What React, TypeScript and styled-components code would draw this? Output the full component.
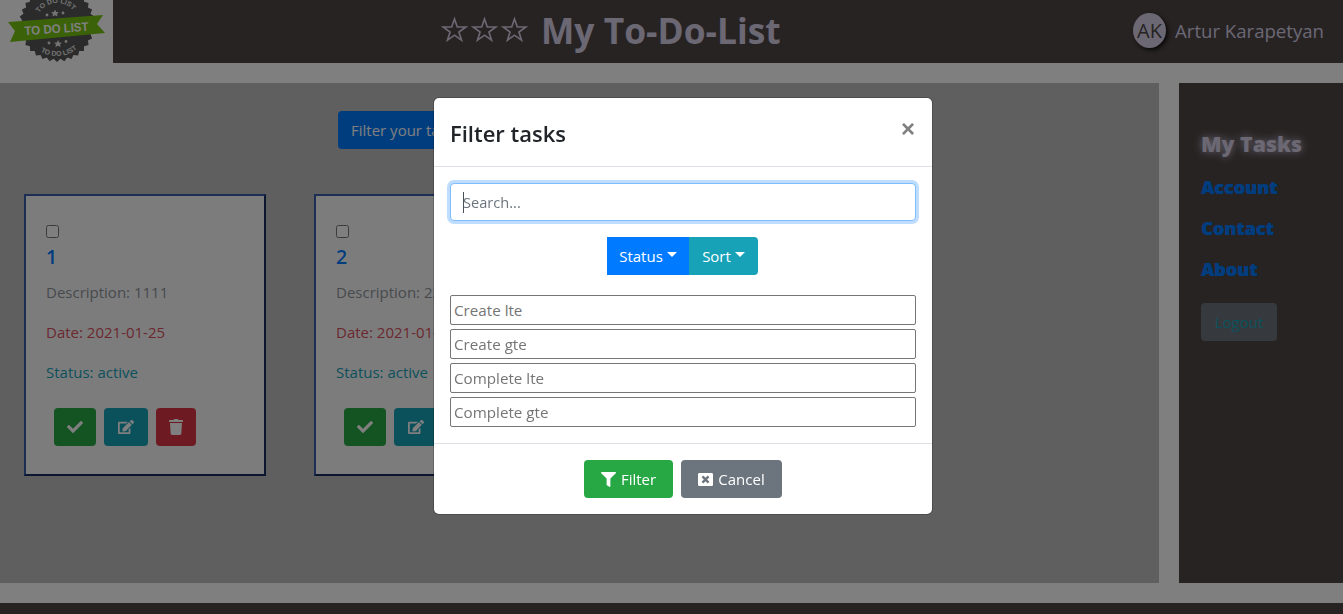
import React from 'react';
import styled, { createGlobalStyle } from 'styled-components';
import { FaCheck, FaEdit, FaTrash, FaFilter, FaWindowClose } from 'react-icons/fa';

const FONT = `"Open Sans", "Noto Sans", "Liberation Sans", sans-serif`;

const GlobalStyle = createGlobalStyle`
  html, body {
    margin: 0;
    height: 100%;
    overflow: hidden;
    background: #fff;
    font-family: ${FONT};
  }
  * { box-sizing: border-box; }
`;

const Page = styled.div`
  height: 614px;
  overflow: hidden;
`;

const Header = styled.header`
  display: flex;
  height: 63px;
`;

const LogoBox = styled.div`
  flex: 0 0 113px;
  overflow: hidden;
`;

const HeaderBar = styled.div`
  flex: 1;
  display: flex;
  align-items: center;
  justify-content: space-between;
  padding: 0 19px 0 328px;
  background: #4e4646;
  color: #d6d0e6;
`;

const Title = styled.h1`
  display: flex;
  align-items: center;
  gap: 13px;
  margin: -4px 0 0;
  font-size: 35.4px;
  font-weight: 700;
  white-space: nowrap;
`;

const Stars = styled.span`
  display: flex;
  gap: 3px;
`;

const User = styled.div`
  display: flex;
  align-items: center;
  gap: 9px;
  margin-top: -2px;
  font-size: 18.6px;
  white-space: nowrap;
`;

const Avatar = styled.div`
  width: 33px;
  height: 35px;
  border-radius: 50%;
  display: flex;
  align-items: center;
  justify-content: center;
  background: #d6d0e6;
  color: #4e4646;
  font-size: 20px;
  box-shadow: 2px 2px 4px rgba(0, 0, 0, 0.8);
`;

const Content = styled.div`
  display: flex;
  gap: 20px;
  height: 500px;
  margin-top: 20px;
`;

const Main = styled.main`
  flex: 1;
  padding-top: 28px;
  background: #bebebe;
`;

const FilterOpen = styled.button`
  display: block;
  height: 38px;
  margin-left: 338px;
  padding: 0 13px;
  border: 0;
  border-radius: 4px;
  background: #007bff;
  color: #fff;
  font-family: ${FONT};
  font-size: 15px;
`;

const CardRow = styled.div`
  display: flex;
  gap: 48px;
  margin-top: 45px;
  padding-left: 24px;
`;

const Card = styled.article`
  width: 242px;
  height: 282px;
  padding: 29px 20px 0;
  background: #f8f9fa;
  border: 2px solid;
  border-color: #3a5ca8 #182c60 #182c60 #3a5ca8;
`;

const Check = styled.input`
  display: block;
  width: 13px;
  height: 13px;
  margin: 0;
`;

const CardNumber = styled.h5`
  margin: 4px 0 8px;
  color: #007bff;
  font-size: 19.5px;
  font-weight: 600;
  line-height: 30px;
`;

const toneColors = {
  muted: '#8f959a',
  danger: '#d9515e',
  info: '#17a2b8',
};

const CardText = styled.p<{ $tone: keyof typeof toneColors }>`
  margin: 0 0 16px;
  color: ${({ $tone }) => toneColors[$tone]};
  font-size: 15px;
  line-height: 24px;
  white-space: nowrap;
`;

const CardActions = styled.div`
  display: flex;
  gap: 8px;
  margin: 0 0 0 8px;
  padding-top: 8px;
`;

const buttonColors = {
  success: '#28a745',
  info: '#17a2b8',
  danger: '#dc3545',
  primary: '#007bff',
  secondary: '#6c757d',
};

const IconButton = styled.button<{ $color: keyof typeof buttonColors; $width: number }>`
  display: flex;
  align-items: center;
  justify-content: center;
  flex: 0 0 ${({ $width }) => $width}px;
  height: 38px;
  padding: 0;
  border: 0;
  border-radius: 4px;
  background: ${({ $color }) => buttonColors[$color]};
  color: #fff;
  font-size: 16px;

  svg {
    width: auto;
    height: 1em;
  }
`;

const Sidebar = styled.aside`
  flex: 0 0 164px;
  padding: 44px 22px 0;
  background: #4e4646;
`;

const NavLink = styled.a<{ $active?: boolean }>`
  display: block;
  height: ${({ $active }) => ($active ? '44px' : '41px')};
  color: ${({ $active }) => ($active ? '#d6d0e6' : '#007bff')};
  font-size: ${({ $active }) => ($active ? '21.3px' : '18px')};
  font-weight: 800;
  line-height: 33px;
  white-space: nowrap;
  text-shadow: ${({ $active }) => ($active ? '0 0 8px #d6d0e6' : '0.4px 0 0 #007bff')};
`;

const Logout = styled.button`
  display: block;
  width: 76px;
  height: 38px;
  margin-top: 9px;
  padding: 0;
  border: 0;
  border-radius: 4px;
  background: #6c757d;
  color: #17a2b8;
  font-family: ${FONT};
  font-size: 15px;
`;

const Footer = styled.footer`
  height: 11px;
  margin-top: 20px;
  background: #4e4646;
`;

const Backdrop = styled.div`
  position: fixed;
  inset: 0;
  display: flex;
  justify-content: center;
  align-items: flex-start;
  padding: 98px 0 0 23px;
  background: rgba(0, 0, 0, 0.5);
`;

const Modal = styled.div`
  width: 498px;
  height: 416px;
  display: flex;
  flex-direction: column;
  border-radius: 5px;
  background: #fff;
  box-shadow: 0 0 0 1px rgba(0, 0, 0, 0.2);
`;

const ModalHeader = styled.div`
  display: flex;
  align-items: flex-start;
  justify-content: space-between;
  height: 69px;
  padding: 19px 17px 0 16px;
  border-bottom: 1px solid #dee2e6;
`;

const ModalTitle = styled.h5`
  margin: 0;
  color: #212529;
  font-size: 22px;
  font-weight: 600;
  line-height: 32px;
`;

const Close = styled.button`
  margin-top: -4px;
  padding: 0;
  border: 0;
  background: none;
  color: #808080;
  font-family: "Liberation Sans", sans-serif;
  font-size: 24px;
  font-weight: 700;
  line-height: 32px;
`;

const ModalBody = styled.div`
  display: flex;
  flex-direction: column;
  padding: 16px;
  height: 277px;
  border-bottom: 1px solid #dee2e6;
`;

const SearchInput = styled.input`
  display: block;
  width: 100%;
  height: 38px;
  padding: 0 12px;
  border: 1px solid #80bdff;
  border-radius: 4px;
  outline: 0;
  box-shadow: 0 0 0 3px rgba(0, 123, 255, 0.25);
  background: linear-gradient(#495057, #495057) 12px center / 1px 21px no-repeat #fff;
  color: #495057;
  font-family: ${FONT};
  font-size: 14.6px;
  &::placeholder { color: #6c757d; opacity: 1; }
`;

const DropdownGroup = styled.div`
  display: flex;
  justify-content: center;
  margin: 16px 0 20px;
  padding-right: 1px;
`;

const DropdownButton = styled.button<{ $color: keyof typeof buttonColors; $last?: boolean; $width: number }>`
  display: flex;
  align-items: center;
  justify-content: center;
  width: ${({ $width }) => $width}px;
  height: 38px;
  padding: 0;
  border: 0;
  border-radius: ${({ $last }) => ($last ? '0 4px 4px 0' : '0')};
  background: ${({ $color }) => buttonColors[$color]};
  color: #fff;
  font-family: ${FONT};
  font-size: 15px;
`;

const Caret = styled.span`
  width: 0;
  height: 0;
  margin: -3px 0 0 4px;
  border-top: 5px solid #fff;
  border-left: 5px solid transparent;
  border-right: 5px solid transparent;
`;

const DateFields = styled.div`
  display: flex;
  flex-direction: column;
  gap: 4px;
`;

const DateInput = styled.input`
  display: block;
  width: 100%;
  height: 30px;
  padding: 0 3px;
  border: 1px solid #767676;
  border-radius: 2px;
  font-family: ${FONT};
  font-size: 15.2px;
  &::placeholder { color: #757575; opacity: 1; }
`;

const ModalFooter = styled.div`
  display: flex;
  justify-content: center;
  gap: 8px;
  padding-top: 16px;
`;

const FooterButton = styled.button<{ $color: keyof typeof buttonColors; $width: number }>`
  display: flex;
  align-items: center;
  justify-content: center;
  gap: 5px;
  width: ${({ $width }) => $width}px;
  height: 38px;
  padding: 0;
  border: 0;
  border-radius: 4px;
  background: ${({ $color }) => buttonColors[$color]};
  color: #fff;
  font-family: ${FONT};
  font-size: 15px;
`;

const StarIcon = () => (
  <svg width="27" height="27" viewBox="0 0 28 28" aria-hidden="true">
    <path
      d="M14 3l2.9 8.4h8.8l-7.1 5.2 2.7 8.5-7.3-5.2-7.3 5.2 2.7-8.5-7.1-5.2h8.8z"
      fill="none"
      stroke="currentColor"
      strokeWidth="1.7"
    />
  </svg>
);

const sealPoints = () => {
  const points: string[] = [];
  for (let i = 0; i < 64; i++) {
    const r = i % 2 ? 35 : 38;
    const a = (i / 64) * Math.PI * 2;
    points.push(`${(57 + r * Math.cos(a)).toFixed(1)},${(24 + r * Math.sin(a)).toFixed(1)}`);
  }
  return points.join(' ');
};

const Logo = () => (
  <svg width="113" height="63" viewBox="0 0 113 63" role="img" aria-label="To do list">
    <polygon points={sealPoints()} fill="#565656" />
    <defs>
      <path id="seal-top" d="M36 24a21 21 0 0 1 42 0" />
      <path id="seal-bottom" d="M25 24a32 32 0 0 0 64 0" />
    </defs>
    <g fill="#e6e6e6" fontFamily='"Liberation Sans", sans-serif' fontWeight="700" fontSize="7">
      <text textAnchor="middle" transform="rotate(-4 57 24)">
        <textPath href="#seal-top" startOffset="50%">TO DO LIST</textPath>
      </text>
      <text textAnchor="middle" transform="rotate(-4 57 24)">
        <textPath href="#seal-bottom" startOffset="50%">TO DO LIST</textPath>
      </text>
    </g>
    <g fill="#e6e6e6">
      <circle cx="47" cy="15" r="1.4" />
      <polygon points="55,9.5 56.2,12 59,12.3 57,14 57.6,16.5 55,15.2 52.4,16.5 53,14 51,12.3 53.8,12" />
      <circle cx="63" cy="13" r="1.4" />
      <circle cx="49" cy="43" r="1.4" />
      <polygon points="58,40 59.2,42.5 62,42.8 60,44.5 60.6,47 58,45.7 55.4,47 56,44.5 54,42.8 56.8,42.5" />
      <circle cx="66" cy="41.5" r="1.4" />
    </g>
    <polygon points="8,22 103,15 97,24 105,33 10,42 15,31" fill="#76c410" />
    <text
      x="56.5"
      y="33"
      textAnchor="middle"
      textLength="64"
      lengthAdjust="spacingAndGlyphs"
      transform="rotate(-4 56 29)"
      fill="#fff"
      fontFamily='"Liberation Sans", sans-serif'
      fontWeight="700"
      fontSize="12.5"
    >
      TO DO LIST
    </text>
  </svg>
);

const tasks = [
  { id: 1, description: '1111', date: '2021-01-25', status: 'active' },
  { id: 2, description: '2222', date: '2021-01-25', status: 'active' },
];

const dateFields = ['Create lte', 'Create gte', 'Complete lte', 'Complete gte'];

export default function App() {
  return (
    <Page>
      <GlobalStyle />
      <Header>
        <LogoBox>
          <Logo />
        </LogoBox>
        <HeaderBar>
          <Title>
            <Stars>
              <StarIcon />
              <StarIcon />
              <StarIcon />
            </Stars>
            My To-Do-List
          </Title>
          <User>
            <Avatar>AK</Avatar>
            Artur Karapetyan
          </User>
        </HeaderBar>
      </Header>

      <Content>
        <Main>
          <FilterOpen>Filter your tasks</FilterOpen>
          <CardRow>
            {tasks.map((task) => (
              <Card key={task.id}>
                <Check type="checkbox" />
                <CardNumber>{task.id}</CardNumber>
                <CardText $tone="muted">Description: {task.description}</CardText>
                <CardText $tone="danger">Date: {task.date}</CardText>
                <CardText $tone="info">Status: {task.status}</CardText>
                <CardActions>
                  <IconButton $color="success" $width={42}>
                    <FaCheck />
                  </IconButton>
                  <IconButton $color="info" $width={44}>
                    <FaEdit />
                  </IconButton>
                  <IconButton $color="danger" $width={40}>
                    <FaTrash />
                  </IconButton>
                </CardActions>
              </Card>
            ))}
          </CardRow>
        </Main>
        <Sidebar>
          <NavLink $active>My Tasks</NavLink>
          <NavLink>Account</NavLink>
          <NavLink>Contact</NavLink>
          <NavLink>About</NavLink>
          <Logout>Logout</Logout>
        </Sidebar>
      </Content>
      <Footer />

      <Backdrop>
        <Modal>
          <ModalHeader>
            <ModalTitle>Filter tasks</ModalTitle>
            <Close>×</Close>
          </ModalHeader>
          <ModalBody>
            <SearchInput placeholder="Search..." autoFocus />
            <DropdownGroup>
              <DropdownButton $color="primary" $width={82}>
                Status
                <Caret />
              </DropdownButton>
              <DropdownButton $color="info" $last $width={69}>
                Sort
                <Caret />
              </DropdownButton>
            </DropdownGroup>
            <DateFields>
              {dateFields.map((name) => (
                <DateInput key={name} placeholder={name} />
              ))}
            </DateFields>
          </ModalBody>
          <ModalFooter>
            <FooterButton $color="success" $width={89}>
              <FaFilter />
              Filter
            </FooterButton>
            <FooterButton $color="secondary" $width={101}>
              <FaWindowClose />
              Cancel
            </FooterButton>
          </ModalFooter>
        </Modal>
      </Backdrop>
    </Page>
  );
}
